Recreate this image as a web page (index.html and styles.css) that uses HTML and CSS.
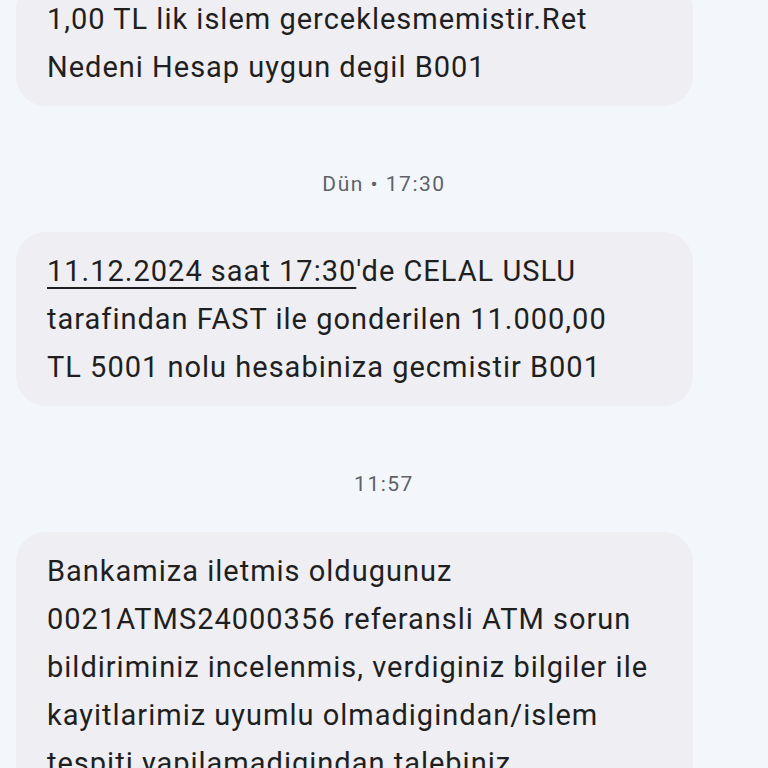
FILE: index.html
```html
<!DOCTYPE html>
<html lang="tr">
<head>
<meta charset="utf-8">
<link rel="stylesheet" href="styles.css">
</head>
<body>
<main class="thread">
  <div class="bubble">1,00 TL lik islem gerceklesmemistir.Ret<br>Nedeni Hesap uygun degil B001</div>
  <div class="stamp">Dün • 17:30</div>
  <div class="bubble"><span class="link">11.12.2024 saat 17:30</span>'de CELAL USLU<br>tarafindan FAST ile gonderilen 11.000,00<br>TL 5001 nolu hesabiniza gecmistir B001</div>
  <div class="stamp">11:57</div>
  <div class="bubble">Bankamiza iletmis oldugunuz<br>0021ATMS24000356 referansli ATM sorun<br>bildiriminiz incelenmis, verdiginiz bilgiler ile<br>kayitlarimiz uyumlu olmadigindan/islem<br>tespiti yapilamadigindan talebiniz<br>olumsuz sonuclanmistir</div>
</main>
</body>
</html>
```

FILE: styles.css
```css
html, body {
  margin: 0;
  padding: 0;
  background: #f3f7fb;
  height: 768px;
  overflow: hidden;
}
.thread {
  display: flex;
  flex-direction: column;
  align-items: flex-start;
  padding-left: 16px;
  margin-top: -20px;
  font-family: Roboto, "Noto Sans", sans-serif;
}
.bubble {
  box-sizing: border-box;
  width: 677px;
  background: #eeeef3;
  border-radius: 30px;
  padding: 15px 31px 15px;
  font-size: 29px;
  letter-spacing: 1px;
  line-height: 48px;
  color: #1f1f1f;
}
.link {
  text-decoration: underline;
  text-decoration-thickness: 2px;
  text-underline-offset: 6px;
}
.stamp {
  align-self: stretch;
  margin-left: -16px;
  text-align: center;
  color: #5f6266;
  font-size: 21px;
  letter-spacing: 1.5px;
  line-height: 24px;
  padding: 66px 0 36px;
}
```
